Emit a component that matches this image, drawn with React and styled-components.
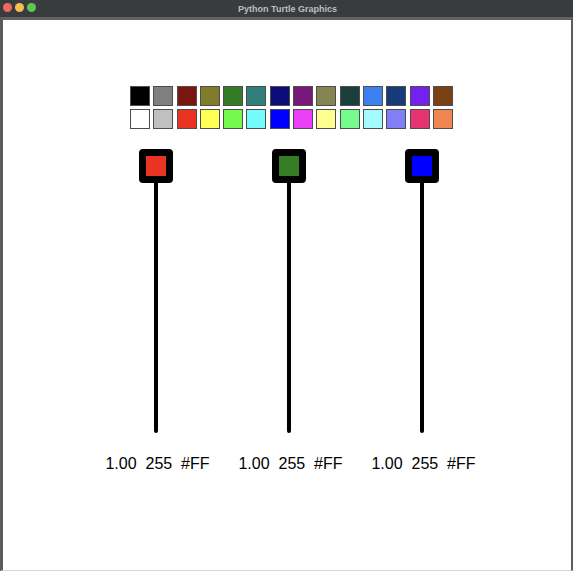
import React from 'react'
import styled, { createGlobalStyle } from 'styled-components'

const GlobalStyle = createGlobalStyle`
  html, body {
    margin: 0;
    padding: 0;
    background: #ffffff;
  }
  body {
    font-family: 'Liberation Sans', Arial, sans-serif;
  }
`

const Window = styled.div`
  width: 573px;
  height: 571px;
  display: flex;
  flex-direction: column;
  background: #393c3e;
  overflow: hidden;
`

const TitleBar = styled.div`
  position: relative;
  height: 17px;
  display: flex;
  align-items: center;
  justify-content: center;
  background: #393c3e;
`

const Lights = styled.div`
  position: absolute;
  left: 3px;
  top: 3px;
  display: flex;
  gap: 3px;
`

const Light = styled.span`
  width: 9px;
  height: 9px;
  border-radius: 50%;
  background: ${(props) => props.color};
`

const Title = styled.div`
  font-size: 9px;
  font-weight: bold;
  color: #bfbfbf;
  padding-left: 2px;
`

const Canvas = styled.div`
  flex: 1;
  background: #ffffff;
  border-top: 3px solid #5f6163;
  border-left: 3px solid #5c5c5c;
  border-right: 2px solid #5c5c5c;
  border-bottom: 1px solid #d4d4d4;
  display: flex;
  flex-direction: column;
`

const Palette = styled.div`
  margin-top: 66px;
  margin-left: 127px;
  display: grid;
  grid-template-columns: repeat(14, 20px);
  grid-auto-rows: 20px;
  column-gap: 3.3px;
  row-gap: 3px;
`

const Swatch = styled.div`
  box-sizing: border-box;
  border: 1px solid #4d4d4d;
  background: ${(props) => props.color};
`

const Sliders = styled.div`
  margin-top: 20px;
  margin-left: 86px;
  display: flex;
`

const Slider = styled.div`
  width: 133px;
  display: flex;
  flex-direction: column;
  align-items: center;
`

const Handle = styled.div`
  box-sizing: border-box;
  width: 34px;
  height: 34px;
  border: 7px solid #000000;
  border-radius: 4px;
  background: ${(props) => props.color};
`

const Track = styled.div`
  width: 4px;
  height: 250px;
  background: #000000;
  border-radius: 0 0 2px 2px;
`

const Readout = styled.div`
  margin-top: 22px;
  padding-left: 4px;
  font-size: 16px;
  line-height: 18px;
  color: #000000;
  white-space: pre;
`

const topRow = [
  '#000000', '#808080', '#7a1610', '#807c2a', '#357b25', '#317e7c', '#0b0b7b',
  '#781878', '#85834f', '#1b403c', '#3d81f0', '#173b78', '#7421f0', '#7a4214',
]

const bottomRow = [
  '#ffffff', '#c0c0c0', '#ea3323', '#ffff55', '#75f94c', '#74fbfd', '#0000ff',
  '#ea3ff7', '#ffff91', '#75fb8d', '#a4fbfd', '#807ff7', '#e73371', '#f08650',
]

const sliders = [
  { id: 'r', color: '#ea3323' },
  { id: 'g', color: '#367b26' },
  { id: 'b', color: '#0000ff' },
]

const App = () => {
  return (
    <>
      <GlobalStyle />
      <Window>
        <TitleBar>
          <Lights>
            <Light color='#ec6a5f' />
            <Light color='#f4bf4f' />
            <Light color='#61c554' />
          </Lights>
          <Title>Python Turtle Graphics</Title>
        </TitleBar>
        <Canvas>
          <Palette>
            {topRow.concat(bottomRow).map((c, i) => (
              <Swatch key={i} color={c} />
            ))}
          </Palette>
          <Sliders>
            {sliders.map((s) => (
              <Slider key={s.id}>
                <Handle color={s.color} />
                <Track />
                <Readout>{'1.00  255  #FF'}</Readout>
              </Slider>
            ))}
          </Sliders>
        </Canvas>
      </Window>
    </>
  )
}

export default App
